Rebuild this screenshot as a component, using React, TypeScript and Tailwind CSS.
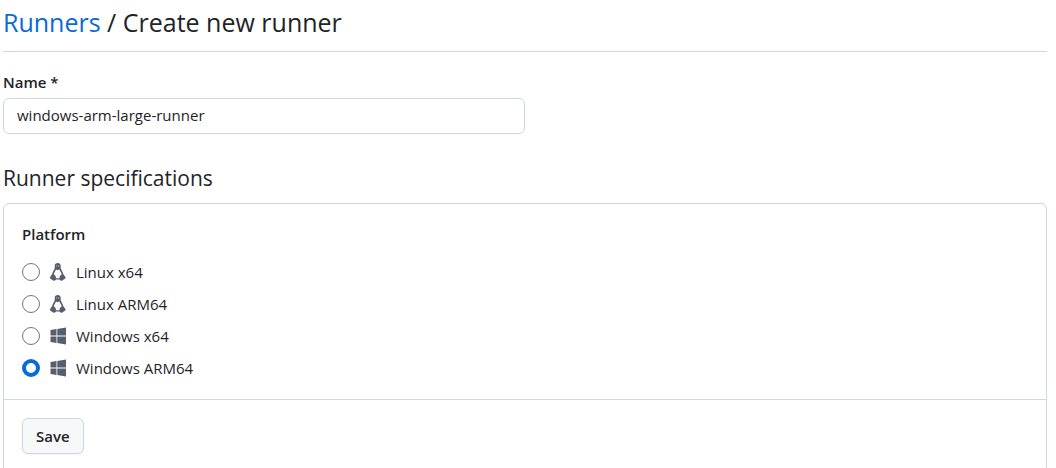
import { useState } from "react";

function LinuxIcon() {
  return (
    <svg className="h-[18px] w-4 shrink-0" viewBox="0 0 16 18" fill="none" aria-hidden="true">
      <path
        fill="#57606a"
        fillRule="evenodd"
        d="M7.700 0C5.800 0 4.700 1.100 4.700 2.800v2.500C4.200 7 2.600 8.800 2 11.200L.4 13.500c-.7 1.100-.4 2.100.5 2.600l2.300 1.300c1.100.6 2.400.3 2.900-.8h3.300c.5 1.100 1.800 1.400 2.900.8l2.300-1.300c.9-.5 1.200-1.500.5-2.600l-1.700-2.300c-.6-2.400-2.100-4.200-2.700-5.900V2.800C10.700 1.100 9.600 0 7.700 0ZM6 6.400l1.700.8 1.700-.8c.6 1.700 2 3.200 2.500 4.900-1.300.3-2.200 1.800-2.500 3.900H6.100c-.3-2.100-1.200-3.600-2.500-3.900.5-1.700 1.800-3.200 2.400-4.900Z"
      />
      <circle cx="6.700" cy="2.900" r=".6" fill="#b4bac0" />
      <circle cx="8.700" cy="2.900" r=".6" fill="#b4bac0" />
    </svg>
  );
}

function WindowsIcon() {
  return (
    <svg className="h-[18px] w-4 shrink-0" viewBox="0 0 16 18" fill="#57606a" aria-hidden="true">
      <path d="M.5 2.900 6.500 2v6.500h-6ZM7.300 1.900 16 .6v7.900H7.300ZM.5 9.500h6V16l-6-.9ZM7.300 9.500H16v7.900l-8.700-1.300Z" />
    </svg>
  );
}

const platforms = [
  { id: "linux-x64", label: "Linux x64", Icon: LinuxIcon },
  { id: "linux-arm64", label: "Linux ARM64", Icon: LinuxIcon },
  { id: "windows-x64", label: "Windows x64", Icon: WindowsIcon },
  { id: "windows-arm64", label: "Windows ARM64", Icon: WindowsIcon },
];

export default function App() {
  const [name, setName] = useState("windows-arm-large-runner");
  const [platform, setPlatform] = useState("windows-arm64");

  return (
    <main className="min-h-screen bg-white pt-1 pr-[9px] pl-[3px] font-['Segoe_UI','Open_Sans',sans-serif] text-[15px] leading-6 text-[#1f2328]">
      <h1 className="border-b border-[#d0d7de] pb-2.5 text-[25px] leading-[37px]">
        <a href="#runners" className="text-[#0969da]">Runners</a> / Create new runner
      </h1>
      <form onSubmit={(e) => e.preventDefault()}>
        <div className="flex flex-col gap-1 pt-[18px]">
          <label htmlFor="name" className="font-semibold">Name *</label>
          <input
            id="name"
            type="text"
            required
            value={name}
            onChange={(e) => setName(e.target.value)}
            className="h-9 w-1/2 rounded-md border border-[#d0d7de] bg-white px-[13px] pb-0.5"
          />
        </div>
        <h2 className="pt-7 pb-[9px] text-[21px] leading-8">Runner specifications</h2>
        <div className="rounded-md border border-[#d0d7de]">
          <fieldset className="px-[18px] pt-[18px] pb-[15px]">
            <legend className="float-left w-full font-semibold">Platform</legend>
            <div className="clear-both flex flex-col pt-2.5">
              {platforms.map(({ id, label, Icon }) => (
                <label key={id} htmlFor={id} className="flex h-8 items-center">
                  <input
                    id={id}
                    type="radio"
                    name="platform"
                    checked={platform === id}
                    onChange={() => setPlatform(id)}
                    className="size-[18px] shrink-0 appearance-none rounded-full border border-[#6e7781] bg-white checked:border-4 checked:border-[#0969da]"
                  />
                  <span className="flex items-center gap-[10px] pl-[10px]">
                    <Icon />
                    {label}
                  </span>
                </label>
              ))}
            </div>
          </fieldset>
          <div className="border-t border-[#d0d7de] p-[18px]">
            <button
              type="submit"
              className="h-9 rounded-md border border-[#d0d7de] bg-[#f6f8fa] px-[13px] font-semibold shadow-xs"
            >
              Save
            </button>
          </div>
        </div>
      </form>
    </main>
  );
}
